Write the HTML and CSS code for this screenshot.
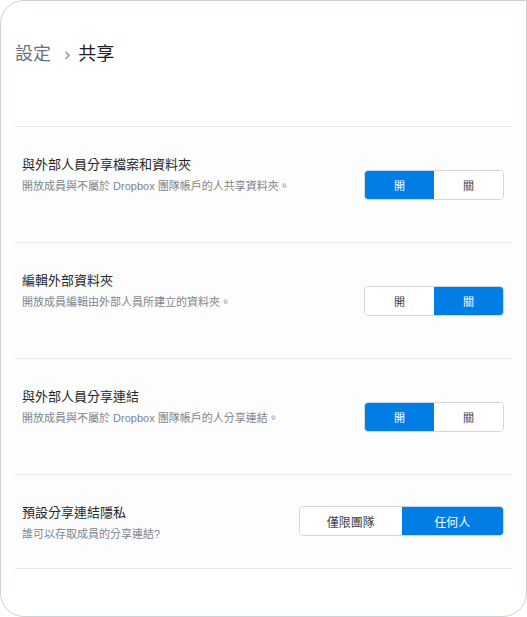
FILE: index.html
```html
<!DOCTYPE html>
<html>
  <head>
    <meta charset="UTF-8" />
    <title>設定 - 共享</title>
    <link rel="stylesheet" href="styles.css">
  </head>
  <body>
    <div class="frame">
      <div class="crumbs">
        <span class="parent">設定</span>
        <span class="sep">›</span>
        <span class="current">共享</span>
      </div>
      <ul class="settings">
        <li class="row">
          <div class="info">
            <div class="title">與外部人員分享檔案和資料夾</div>
            <div class="desc">開放成員與不屬於 Dropbox 團隊帳戶的人共享資料夾。</div>
          </div>
          <div class="toggle">
            <a href="#" class="on">開</a>
            <a href="#">關</a>
          </div>
        </li>
        <li class="row">
          <div class="info">
            <div class="title">編輯外部資料夾</div>
            <div class="desc">開放成員編輯由外部人員所建立的資料夾。</div>
          </div>
          <div class="toggle">
            <a href="#">開</a>
            <a href="#" class="on">關</a>
          </div>
        </li>
        <li class="row">
          <div class="info">
            <div class="title">與外部人員分享連結</div>
            <div class="desc">開放成員與不屬於 Dropbox 團隊帳戶的人分享連結。</div>
          </div>
          <div class="toggle">
            <a href="#" class="on">開</a>
            <a href="#">關</a>
          </div>
        </li>
        <li class="row last">
          <div class="info">
            <div class="title">預設分享連結隱私</div>
            <div class="desc">誰可以存取成員的分享連結?</div>
          </div>
          <div class="toggle wide">
            <a href="#">僅限團隊</a>
            <a href="#" class="on">任何人</a>
          </div>
        </li>
      </ul>
    </div>
  </body>
</html>
```

FILE: styles.css
```css
* {
  margin: 0;
  padding: 0;
  text-decoration: none;
  box-sizing: border-box;
}
body {
  font-family: 'Liberation Sans', 'Noto Sans CJK TC', sans-serif;
  background: #fff;
}
.frame {
  width: 527px;
  height: 617px;
  border: 1px solid #cdd1d9;
  border-radius: 24px 0 24px 24px;
  padding: 0 14px;
  overflow: hidden;
}
.crumbs {
  height: 125px;
  padding-top: 40px;
  font-size: 18px;
  line-height: 26px;
}
.crumbs .parent {
  color: #6c7078;
}
.crumbs .sep {
  color: #8f949b;
  font-size: 19px;
  margin: 0 3px 0 8px;
}
.crumbs .current {
  color: #1e1e1e;
}
.settings {
  list-style: none;
  width: 497px;
  border-top: 1px solid #e6e8ec;
  background: #fdfdfd;
}
.row {
  height: 116px;
  border-bottom: 1px solid #e6e8ec;
  display: flex;
  justify-content: space-between;
  padding: 28px 8px 0 7px;
}
.row.last {
  height: 94px;
}
.title {
  font-size: 13px;
  line-height: 20px;
  color: #26272a;
}
.desc {
  font-size: 11px;
  line-height: 16px;
  margin-top: 3px;
  color: #80858c;
}
.toggle {
  display: flex;
  width: 140px;
  height: 30px;
  margin-top: 15px;
  border: 1px solid #d3d7dc;
  border-radius: 4px;
  overflow: hidden;
}
.toggle a {
  flex: 1;
  display: flex;
  align-items: center;
  justify-content: center;
  font-size: 11px;
  color: #3d4046;
  background: #fff;
}
.toggle a.on {
  background: #007ee5;
  color: #fff;
}
.toggle.wide {
  width: 205px;
  margin-top: 3px;
}
.toggle.wide a {
  font-size: 12px;
}
```
